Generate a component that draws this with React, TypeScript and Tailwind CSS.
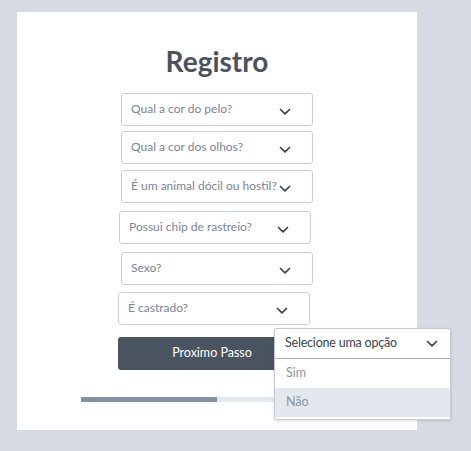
const questions: { label: string; ml: number; mt: number }[] = [
  { label: 'Qual a cor do pelo?', ml: 104, mt: 0 },
  { label: 'Qual a cor dos olhos?', ml: 104, mt: 5 },
  { label: 'É um animal dócil ou hostil?', ml: 104, mt: 6 },
  { label: 'Possui chip de rastreio?', ml: 102, mt: 8 },
  { label: 'Sexo?', ml: 104, mt: 8 },
  { label: 'É castrado?', ml: 101, mt: 7 },
];

function Chevron({ className = '' }: { className?: string }) {
  return (
    <svg width="12" height="8" viewBox="0 0 12 8" fill="none" className={className}>
      <path d="M1.5 1.5 L6 5.8 L10.5 1.5" stroke="#3b4350" strokeWidth="1.7" strokeLinecap="round" strokeLinejoin="round" />
    </svg>
  );
}

export default function App() {
  return (
    <div className="w-[471px] h-[451px] bg-[#d5dae3] pt-[12px] pl-[17px] relative" style={{ fontFamily: 'Lato, "Open Sans", sans-serif' }}>
      <div className="w-[400px] h-[418px] bg-white flex flex-col">
        <h1 className="mt-[32px] text-center text-[28px] leading-[34px] font-bold text-[#4a525e]">Registro</h1>
        <div className="mt-[15px] flex flex-col">
          {questions.map((q) => (
            <div
              key={q.label}
              className="w-[192px] h-[33px] border border-[#c9ced6] rounded-[3px] flex items-center justify-between pl-[9px] pr-[21px] bg-white"
              style={{ marginLeft: q.ml, marginTop: q.mt }}
            >
              <span className="text-[12px] text-[#7b8496] whitespace-nowrap -mt-[2px]">{q.label}</span>
              <Chevron className="mt-[5px] shrink-0" />
            </div>
          ))}
        </div>
        <button className="ml-[101px] mt-[12px] w-[192px] h-[33px] rounded-[3px] bg-[#4a5360] text-white text-[12.5px] flex items-center justify-center pr-[4px]">
          Proximo Passo
        </button>
        <div className="ml-[64px] mt-[27px] w-[200px] h-[5px] bg-[#e3e8ef] flex">
          <div className="w-[136px] h-full bg-[#8490a4]" />
        </div>
      </div>

      <div className="absolute left-[274px] top-[328px] w-[177px] bg-white border border-[#c4c9d1] rounded-[2px] shadow-[0_1px_3px_rgba(0,0,0,0.12)]">
        <div className="h-[30px] border-b border-[#a9afb9] flex items-center justify-between pl-[10px] pr-[12px]">
          <span className="text-[12.5px] tracking-[-0.2px] text-[#3b4350]">Selecione uma opção</span>
          <Chevron />
        </div>
        <div className="h-[29px] flex items-center pl-[11px] text-[12.5px] text-[#8a93a3]">Sim</div>
        <div className="h-[29px] flex items-center pl-[11px] text-[12.5px] text-[#8a93a3] bg-[#e3e8ef]">Não</div>
        <div className="h-[2px]" />
      </div>
    </div>
  );
}
